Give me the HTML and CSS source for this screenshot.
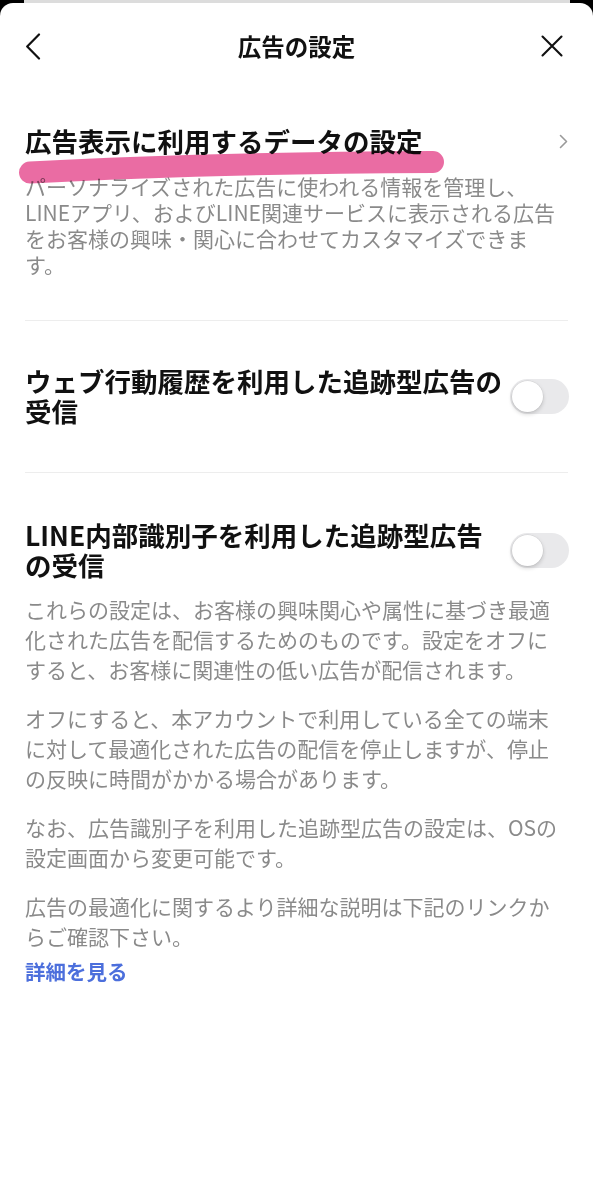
FILE: index.html
```html
<!DOCTYPE html>
<html lang="ja">
<head>
<meta charset="utf-8">
<title>広告の設定</title>
<link rel="stylesheet" href="styles.css">
</head>
<body>
<div class="backdrop">
  <div class="peek"></div>
  <div class="sheet">
    <header class="nav">
      <svg class="nav-back" width="16" height="27" viewBox="0 0 16 27"><polyline points="14,1.5 2.2,13.5 14,25.5" fill="none" stroke="#111" stroke-width="2.2" stroke-linecap="round" stroke-linejoin="round"/></svg>
      <h1 class="nav-title">広告の設定</h1>
      <svg class="nav-close" width="22" height="22" viewBox="0 0 22 22"><path d="M1.5 1.5 L20.5 20.5 M20.5 1.5 L1.5 20.5" fill="none" stroke="#111" stroke-width="2.1" stroke-linecap="round"/></svg>
    </header>

    <section class="block block-first">
      <div class="row">
        <h2 class="heading">広告表示に利用するデータの設定</h2>
        <svg class="chev" width="9" height="15" viewBox="0 0 9 15"><polyline points="1.5,1.5 7.5,7.5 1.5,13.5" fill="none" stroke="#9a9a9a" stroke-width="1.6" stroke-linecap="round" stroke-linejoin="round"/></svg>
      </div>
      <p class="desc">パーソナライズされた広告に使われる情報を管理し、<br>LINEアプリ、およびLINE関連サービスに表示される広告<br>をお客様の興味・関心に合わせてカスタマイズできま<br>す。</p>
      <svg class="marker" width="593" height="120" viewBox="0 0 593 120"><path d="M30 83.5 Q200 74 433 73" fill="none" stroke="#e8619c" stroke-width="22" stroke-linecap="round" opacity="0.93"/></svg>
    </section>

    <div class="divider"></div>

    <section class="block block-toggle">
      <div class="row">
        <h2 class="heading">ウェブ行動履歴を利用した追跡型広告の<br>受信</h2>
        <span class="switch"><span class="knob"></span></span>
      </div>
    </section>

    <div class="divider"></div>

    <section class="block block-last">
      <div class="row">
        <h2 class="heading">LINE内部識別子を利用した追跡型広告<br>の受信</h2>
        <span class="switch"><span class="knob"></span></span>
      </div>
      <div class="notes">
        <p>これらの設定は、お客様の興味関心や属性に基づき最適<br>化された広告を配信するためのものです。設定をオフに<br>すると、お客様に関連性の低い広告が配信されます。</p>
        <p>オフにすると、本アカウントで利用している全ての端末<br>に対して最適化された広告の配信を停止しますが、停止<br>の反映に時間がかかる場合があります。</p>
        <p>なお、広告識別子を利用した追跡型広告の設定は、OSの<br>設定画面から変更可能です。</p>
        <p>広告の最適化に関するより詳細な説明は下記のリンクか<br>らご確認下さい。</p>
        <a class="more" href="#">詳細を見る</a>
      </div>
    </section>
  </div>
</div>
</body>
</html>
```

FILE: styles.css
```css
* { box-sizing: border-box; }

html, body {
  margin: 0;
  padding: 0;
  background: #fff;
}

body {
  font-family: "Noto Sans CJK JP", "Noto Sans", sans-serif;
  color: #111;
}

.backdrop {
  background: #000;
}

.peek {
  height: 3px;
  margin: 0 23px 0 24px;
  background: #dcdcdc;
}

.sheet {
  background: #fff;
  border-radius: 13px 13px 0 0;
  min-height: 1197px;
}

.nav {
  height: 86px;
  display: flex;
  align-items: center;
  justify-content: space-between;
  padding: 0 30px 0 25px;
  position: relative;
}

.nav-back { display: block; }
.nav-close { display: block; }

.nav-title {
  position: absolute;
  left: 0;
  right: 0;
  margin: 0;
  text-align: center;
  font-size: 23.5px;
  font-weight: 700;
  line-height: 30px;
  pointer-events: none;
}

.block {
  position: relative;
  padding: 0 24px 0 25px;
}

.block-first {
  padding-top: 37px;
  padding-bottom: 43px;
}

.block-toggle {
  padding-top: 45px;
  padding-bottom: 46px;
}

.block-last {
  padding-top: 47px;
  padding-bottom: 40px;
}

.row {
  display: flex;
  align-items: center;
  justify-content: space-between;
}

.heading {
  margin: 0;
  font-size: 26.5px;
  font-weight: 700;
  line-height: 30px;
  white-space: nowrap;
  color: #111;
}

.chev {
  display: block;
  margin-right: 1px;
}

.desc {
  margin: 17px 0 0;
  font-size: 21px;
  line-height: 26px;
  color: #8a8a8a;
  white-space: nowrap;
}

.marker {
  position: absolute;
  left: 0;
  top: 0;
  pointer-events: none;
  mix-blend-mode: multiply;
}

.divider {
  height: 1px;
  margin: 0 25px;
  background: #ededed;
}

.switch {
  flex: none;
  position: relative;
  width: 59px;
  height: 35px;
  border-radius: 18px;
  background: #e9e9eb;
}

.knob {
  position: absolute;
  left: 2px;
  top: 2px;
  width: 31px;
  height: 31px;
  border-radius: 50%;
  background: #fff;
  box-shadow: 0 2px 4px rgba(0, 0, 0, 0.18), 0 0 0 0.5px rgba(0, 0, 0, 0.08);
}

.notes {
  margin-top: 14px;
  font-size: 21px;
  line-height: 30px;
  color: #8a8a8a;
  white-space: nowrap;
}

.notes p {
  margin: 0 0 19px;
}

.notes p:last-of-type {
  margin-bottom: 5px;
}

.more {
  display: inline-block;
  font-size: 20.5px;
  font-weight: 700;
  line-height: 30px;
  color: #4c6fdc;
  text-decoration: none;
}
```
